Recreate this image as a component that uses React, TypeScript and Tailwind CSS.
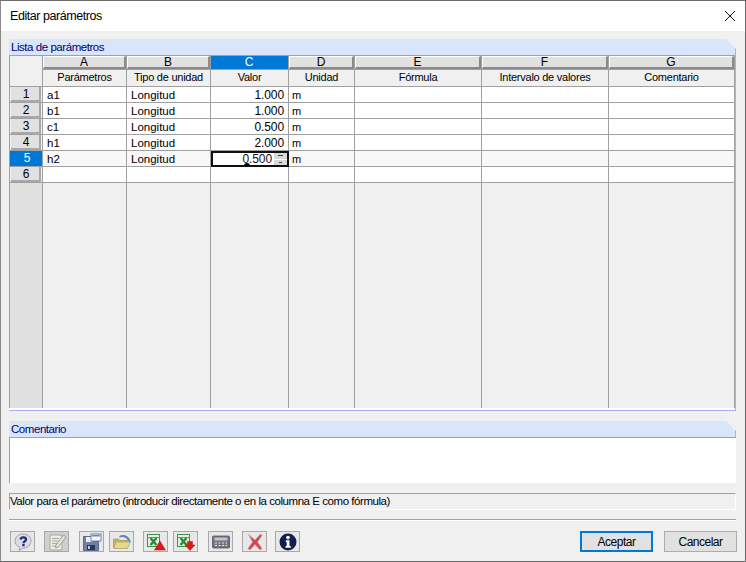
const HEADERS = [
  { letter: "A", title: "Parámetros" },
  { letter: "B", title: "Tipo de unidad" },
  { letter: "C", title: "Valor", active: true },
  { letter: "D", title: "Unidad" },
  { letter: "E", title: "Fórmula" },
  { letter: "F", title: "Intervalo de valores" },
  { letter: "G", title: "Comentario" },
];

const ROWS = [
  { name: "a1", type: "Longitud", value: "1.000", unit: "m" },
  { name: "b1", type: "Longitud", value: "1.000", unit: "m" },
  { name: "c1", type: "Longitud", value: "0.500", unit: "m" },
  { name: "h1", type: "Longitud", value: "2.000", unit: "m" },
  { name: "h2", type: "Longitud", value: "0.500", unit: "m", editing: true },
  { name: "", type: "", value: "", unit: "" },
];

const cell = "border-r border-b border-[#a0a0a0]";

function PanelHeader({ children }: { children: string }) {
  return (
    <div className="h-4 border-r border-[#aab0ee] bg-[#d9e5fb] pl-[2px] text-[11.5px] leading-[17px] tracking-[-0.45px] text-[#000070] [clip-path:polygon(0_0,717px_0,100%_10px,100%_100%,0_100%)]">
      {children}
    </div>
  );
}

function ParamGrid() {
  return (
    <div className="grid grid-cols-[33px_84px_84px_78px_66px_127px_127px_126px] grid-rows-[14px_17px_repeat(6,16px)_225px] border-t border-l border-[#a0a0a0] bg-[#f0f0f0]">
      <div className={`${cell} row-span-2 bg-[#f0f0f0]`} />
      {HEADERS.map((h) => (
        <div
          key={h.letter}
          className={`border-r border-b border-[#a0a0a0] text-center text-[12px] leading-[13px] ${
            h.active ? "bg-[#0078d7] text-white" : "bg-[#e1e1e1] text-black"
          }`}
        >
          <div className={`-mb-[1px] h-[13px] border-t border-r-2 border-b-2 border-l leading-[11px] ${h.active ? "border-[#0078d7]" : "border-t-white border-r-[#8a8a8a] border-b-[#8a8a8a] border-l-white"}`}>
            {h.letter}
          </div>
        </div>
      ))}
      {HEADERS.map((h) => (
        <div key={h.title} className={`${cell} text-center text-[11px] leading-[14px] tracking-[-0.25px]`}>
          {h.title}
        </div>
      ))}
      {ROWS.map((r, i) => (
        <div key={i} className="contents">
          <div className={`${cell} ${r.editing ? "bg-[#0078d7] text-white" : "bg-[#f0f0f0]"} px-px pb-px`}>
            <div
              className={`h-[15px] pl-[2px] text-center text-[12px] leading-[14px] ${
                r.editing ? "" : "border-r-2 border-b-2 border-r-[#a8a8a8] border-b-[#a8a8a8] bg-[#e1e1e1]"
              }`}
            >
              {i + 1}
            </div>
          </div>
          <div className={`${cell} pl-[4px] text-[11.5px] leading-[16px] ${r.editing ? "bg-[#f8f8f8]" : "bg-white"}`}>{r.name}</div>
          <div className={`${cell} pl-[4px] text-[11.5px] leading-[16px] ${r.editing ? "bg-[#f8f8f8]" : "bg-white"}`}>{r.type}</div>
          {r.editing ? (
            <div className="relative flex items-center justify-end border-2 border-[#101010] bg-white pt-px pr-[15px] text-right text-[12px] leading-[13px] tracking-[-0.1px] text-[#111]">
              {r.value}
              <span className="absolute bottom-[-1px] left-[31px] h-[3px] w-[6px] rounded-t-full bg-black" />
              <div className="absolute top-0 right-0 flex h-full w-[13px] flex-col gap-px">
                <div className="flex flex-1 items-center justify-center bg-[#d8d8d8]">
                  <span className="h-px w-[5px] bg-[#444]" />
                </div>
                <div className="flex flex-1 items-center justify-center bg-[#d8d8d8]">
                  <span className="h-px w-[3px] bg-[#444]" />
                </div>
              </div>
            </div>
          ) : (
            <div className={`${cell} bg-white pr-[4px] text-right text-[12px] leading-[16px] tracking-[-0.1px]`}>{r.value}</div>
          )}
          <div className={`${cell} pl-[3px] text-[11px] leading-[16px] ${r.editing ? "bg-[#f8f8f8]" : "bg-white"}`}>{r.unit}</div>
          <div className={`${cell} ${r.editing ? "bg-[#f8f8f8]" : "bg-white"}`} />
          <div className={`${cell} ${r.editing ? "bg-[#f8f8f8]" : "bg-white"}`} />
          <div className={`${cell} ${r.editing ? "bg-[#f8f8f8]" : "bg-white"}`} />
        </div>
      ))}
      <div className="border-r border-[#a0a0a0] bg-[#e0e0e0]" />
      {HEADERS.map((h) => (
        <div key={h.letter} className="border-r border-[#a0a0a0]" />
      ))}
    </div>
  );
}

function HelpIcon() {
  return (
    <svg width="20" height="18" viewBox="0 0 20 18">
      <path d="M10 1c4.800 0 8 3 8 7s-3.200 7-7.500 7L6 17.500l.5-3.500C3.500 12.800 2 10.800 2 8c0-4 3.200-7 8-7z" fill="#dcdce4" stroke="#a0a0a8" />
      <path d="M7.500 6.500c.3-1.500 1.400-2.200 2.800-2.200 1.600 0 2.700.9 2.700 2.200 0 1.900-2.400 1.900-2.500 3.700" fill="none" stroke="#1e2f78" strokeWidth="2.300" />
      <rect x="9.300" y="11" width="2.300" height="2.300" fill="#1e2f78" />
    </svg>
  );
}

function NoteIcon() {
  return (
    <svg width="20" height="18" viewBox="0 0 20 18">
      <path d="M3 2h12v15H3z" fill="#ecece4" stroke="#a8a8a0" />
      <path d="M5 5.500h7M5 8h6M5 10.500h5M5 13h6" stroke="#a8a8a0" />
      <path d="M9 12L16.500 2 19 4l-7.500 10-3 1z" fill="#e4e4dc" stroke="#8e8e86" strokeWidth=".8" />
    </svg>
  );
}

function SaveIcon() {
  return (
    <svg width="20" height="18" viewBox="0 0 20 18">
      <path d="M1.500 3.500h15v14h-15z" fill="#6f7fa8" stroke="#4a5678" strokeWidth=".8" />
      <rect x="4" y="4" width="6" height="5" fill="#f0f0f6" />
      <rect x="5" y="12" width="8" height="5" fill="#2e3550" />
      <rect x="6" y="13" width="2" height="3" fill="#c8ccd8" />
      <rect x="9" y="1" width="10" height="7" fill="#f6f6fa" stroke="#5a668a" strokeWidth=".8" />
      <rect x="10" y="2" width="8" height="1.500" fill="#6a8ac0" />
    </svg>
  );
}

function FolderIcon() {
  return (
    <svg width="20" height="18" viewBox="0 0 20 18">
      <path d="M7 3.500C11 .5 17 2 19 9.500l-1.800.2C15.500 5 11.500 3 8 4.500z" fill="#5a86c0" />
      <path d="M1.500 6h5l1.500 1.500h7.500V15h-14z" fill="#c4b26a" stroke="#a8985a" strokeWidth=".8" />
      <path d="M2 15.500l2-6.500h14l-2.500 6.500z" fill="#e6d88e" stroke="#b8a660" strokeWidth=".8" />
    </svg>
  );
}

function ExcelBase() {
  return (
    <>
      <rect x="1.500" y="1.500" width="12" height="12" fill="#e4efe0" stroke="#3c9048" />
      <path d="M1.500 4.500h12" stroke="#5aa864" />
      <path d="M4.500 5l6 7M10.500 5l-6 7" stroke="#2a8a3c" strokeWidth="2.400" />
    </>
  );
}

function ExcelUpIcon() {
  return (
    <svg width="20" height="18" viewBox="0 0 20 18">
      <ExcelBase />
      <path d="M14 8l5.500 9h-11z" fill="#e01818" stroke="#b01010" strokeWidth=".5" />
    </svg>
  );
}

function ExcelDownIcon() {
  return (
    <svg width="20" height="18" viewBox="0 0 20 18">
      <ExcelBase />
      <path d="M11.500 8.500h5V12H19l-5 5.500L9 12h2.500z" fill="#e01818" stroke="#b01010" strokeWidth=".5" />
    </svg>
  );
}

function CalcIcon() {
  return (
    <svg width="20" height="18" viewBox="0 0 20 18">
      <rect x="1.500" y="3" width="17" height="12" rx="1" fill="#74747e" stroke="#50505a" strokeWidth=".8" />
      <rect x="3.500" y="4.500" width="13" height="3" fill="#c0c4cc" />
      <path d="M4 10h2M7.500 10h2M11 10h2M14.500 10h1.500M4 12.500h2M7.500 12.500h2M11 12.500h2M14.500 12.500h1.500" stroke="#e8e8ee" strokeWidth="1.200" />
    </svg>
  );
}

function CloseIcon() {
  return (
    <svg width="20" height="18" viewBox="0 0 20 18">
      <path d="M3.500 1.500L10 7l5.500-6 1.500 1.500-4.500 6.500 4.500 6.500-2 1.500-5-5.500-5 5.500-2-1.500L7.500 9z" fill="#e0404a" stroke="#b0a8b0" strokeWidth=".8" />
    </svg>
  );
}

function InfoIcon() {
  return (
    <svg width="20" height="18" viewBox="0 0 20 18">
      <circle cx="10" cy="9" r="8.500" fill="#121e50" />
      <circle cx="10" cy="4.600" r="1.800" fill="#fff" />
      <path d="M7.800 7.300h3.700v5.700h1.300v1.700H7.500V13h1.200V9H7.800z" fill="#fff" />
    </svg>
  );
}

function ToolButton({ children, gap, disabled }: { children: React.ReactNode; gap: string; disabled?: boolean }) {
  return (
    <button
      type="button"
      className={`flex h-[21px] w-[25px] items-center justify-center border border-[#a8a8a8] [&_svg]:blur-[0.3px] ${gap} ${
        disabled ? "bg-[#d0d0d0]" : "bg-[#e8e8e8]"
      }`}
    >
      {children}
    </button>
  );
}

export default function App() {
  return (
    <div className="flex h-[562px] w-[746px] flex-col border-t border-r border-b border-l border-t-[#6a6a6a] border-r-[#6a6a6a] border-b-[#6a6a6a] border-l-[#8a8a8a] bg-[#f0f0f0] font-['Liberation_Sans',sans-serif] text-black">
      {/* Title bar */}
      <div className="flex h-[30px] shrink-0 items-center justify-between bg-white px-[9px]">
        <span className="text-[12.5px] tracking-[-0.45px]">Editar parámetros</span>
        <svg width="12" height="12" viewBox="0 0 12 12">
          <path d="M1 1l10 10M11 1L1 11" stroke="#111" strokeWidth="1" />
        </svg>
      </div>

      {/* Parameter list */}
      <div className="mt-[8px] ml-[8px] w-[727px]">
        <PanelHeader>Lista de parámetros</PanelHeader>
        <div className="h-[356px] border-r border-b border-[#aab0ee] bg-white">
          <ParamGrid />
        </div>
      </div>

      {/* Comment */}
      <div className="mt-[10px] ml-[8px] w-[727px]">
        <PanelHeader>Comentario</PanelHeader>
        <div className="h-[46px] border-t border-l border-[#a0a0a0] bg-white" />
      </div>

      {/* Status line */}
      <div className="mt-[10px] ml-[8px] h-[17px] w-[727px] overflow-hidden border border-t-[#a0a0a0] border-r-white border-b-white border-l-[#a0a0a0] text-[11.5px] leading-[14px] tracking-[-0.45px] whitespace-nowrap">
        Valor para el parámetro (introducir directamente o en la columna E como fórmula)
      </div>

      <div className="mt-[9px] ml-[8px] h-[2px] w-[727px] border-t border-b border-t-[#a0a0a0] border-b-white" />

      {/* Toolbar and buttons */}
      <div className="mt-[10px] flex items-start pl-[9px]">
        <ToolButton gap=""><HelpIcon /></ToolButton>
        <ToolButton gap="ml-[9px]" disabled><NoteIcon /></ToolButton>
        <ToolButton gap="ml-[10px]"><SaveIcon /></ToolButton>
        <ToolButton gap="ml-[5px]"><FolderIcon /></ToolButton>
        <ToolButton gap="ml-[9px]"><ExcelUpIcon /></ToolButton>
        <ToolButton gap="ml-[5px]"><ExcelDownIcon /></ToolButton>
        <ToolButton gap="ml-[10px]"><CalcIcon /></ToolButton>
        <ToolButton gap="ml-[9px]"><CloseIcon /></ToolButton>
        <ToolButton gap="ml-[8px]"><InfoIcon /></ToolButton>
        <button type="button" className="ml-[280px] h-[21px] w-[73px] border-2 border-[#0078d7] bg-[#e1e1e1] text-[12px] leading-[14px] tracking-[-0.5px]">
          Aceptar
        </button>
        <button type="button" className="ml-[11px] h-[21px] w-[73px] border border-[#adadad] bg-[#e1e1e1] text-[12px] leading-[14px] tracking-[-0.5px]">
          Cancelar
        </button>
      </div>
    </div>
  );
}
